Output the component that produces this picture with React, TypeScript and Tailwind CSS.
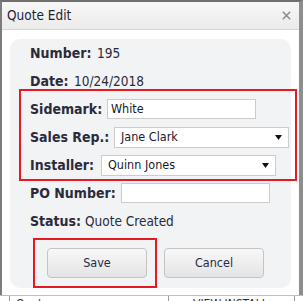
import React from "react";

function Arrow() {
  return (
    <svg width="7" height="5" viewBox="0 0 7 5" className="shrink-0">
      <path d="M0 0 H7 L3.5 5 Z" fill="#111" />
    </svg>
  );
}

export default function App() {
  return (
    <div className="relative w-[303px] h-[301px] overflow-hidden bg-white font-['DejaVu_Sans_Condensed','Liberation_Sans',sans-serif] text-[#2b2b3a]">
      <div className="w-[303px] h-[295px] border-l-2 border-t-2 border-r-4 border-l-[#7c7c7c] border-t-[#6f6f6f] border-r-[#8e8e8e] flex flex-col bg-white">
        <div className="h-[28px] shrink-0 flex items-center justify-between pl-[5px] pr-[8px] bg-gradient-to-b from-[#f7f7f7] to-[#ebebeb] border-b border-[#d6d6d6]">
          <span className="text-[13.5px] leading-none text-[#1f1f33]">Quote Edit</span>
          <svg width="9" height="9" viewBox="0 0 9 9">
            <path d="M0.8 0.8 L8.2 8.2 M8.2 0.8 L0.8 8.2" stroke="#8a8a8a" strokeWidth="1.5" />
          </svg>
        </div>
        <div className="flex-1 pt-[9px] pl-[8px] pr-[8px] pb-[7px]">
          <div className="h-full rounded-[10px] bg-[#f2f3f5] pl-[20px] flex flex-col">
            <div className="h-[28px] flex items-center">
              <span className="w-[67px] shrink-0 text-[14px] font-bold">Number:</span>
              <span className="text-[13.5px]">195</span>
            </div>
            <div className="h-[28px] flex items-center">
              <span className="w-[44px] shrink-0 text-[14px] font-bold">Date:</span>
              <span className="text-[13.5px]">10/24/2018</span>
            </div>
            <div className="h-[28px] flex items-center">
              <span className="w-[77px] shrink-0 text-[14px] font-bold">Sidemark:</span>
              <div className="w-[149px] h-[20px] bg-white border border-[#cccccc] flex items-center pl-[3px] text-[12.5px] text-[#1a1a2a]">White</div>
            </div>
            <div className="h-[28px] flex items-center">
              <span className="w-[84px] shrink-0 text-[14px] font-bold">Sales Rep.:</span>
              <div className="w-[175px] h-[21px] bg-white border border-[#cccccc] flex items-center justify-between pl-[6px] pr-[6px] text-[12.5px] text-[#1a1a2a]">
                <span>Jane Clark</span>
                <Arrow />
              </div>
            </div>
            <div className="h-[28px] flex items-center">
              <span className="w-[71px] shrink-0 text-[14px] font-bold">Installer:</span>
              <div className="w-[175px] h-[21px] bg-white border border-[#cccccc] flex items-center justify-between pl-[6px] pr-[6px] text-[12.5px] text-[#1a1a2a]">
                <span>Quinn Jones</span>
                <Arrow />
              </div>
            </div>
            <div className="h-[28px] flex items-center">
              <span className="w-[91px] shrink-0 text-[14px] font-bold">PO Number:</span>
              <div className="w-[149px] h-[20px] bg-white border border-[#cccccc]" />
            </div>
            <div className="h-[28px] flex items-center">
              <span className="w-[55px] shrink-0 text-[14px] font-bold">Status:</span>
              <span className="text-[13.5px]">Quote Created</span>
            </div>
            <div className="flex gap-[17px] pl-[17px] pt-[13px]">
              <button className="w-[100px] h-[30px] rounded-[4px] border border-[#c4c4c4] bg-gradient-to-b from-[#f8f8f8] to-[#e4e4e4] text-[12.5px] text-[#2a2a44]">Save</button>
              <button className="w-[100px] h-[30px] rounded-[4px] border border-[#c4c4c4] bg-gradient-to-b from-[#f8f8f8] to-[#e4e4e4] text-[12.5px] text-[#2a2a44]">Cancel</button>
            </div>
          </div>
        </div>
      </div>
      <div className="h-[6px] border-t border-[#bdbdbd] flex text-[12px] leading-[16px] text-[#333]">
        <div className="w-[10px] border-r border-[#9a9a9a]" />
        <div className="w-[159px] pl-[6px] border-r border-[#9a9a9a]">Quote</div>
        <div className="w-[126px] pl-[24px] border-r border-[#9a9a9a] uppercase">View Install</div>
      </div>
      <div className="absolute left-[19px] top-[89px] w-[278px] h-[92px] border-2 border-[#e51b24]" />
      <div className="absolute left-[33px] top-[238px] w-[124px] h-[50px] border-2 border-[#e51b24]" />
    </div>
  );
}
